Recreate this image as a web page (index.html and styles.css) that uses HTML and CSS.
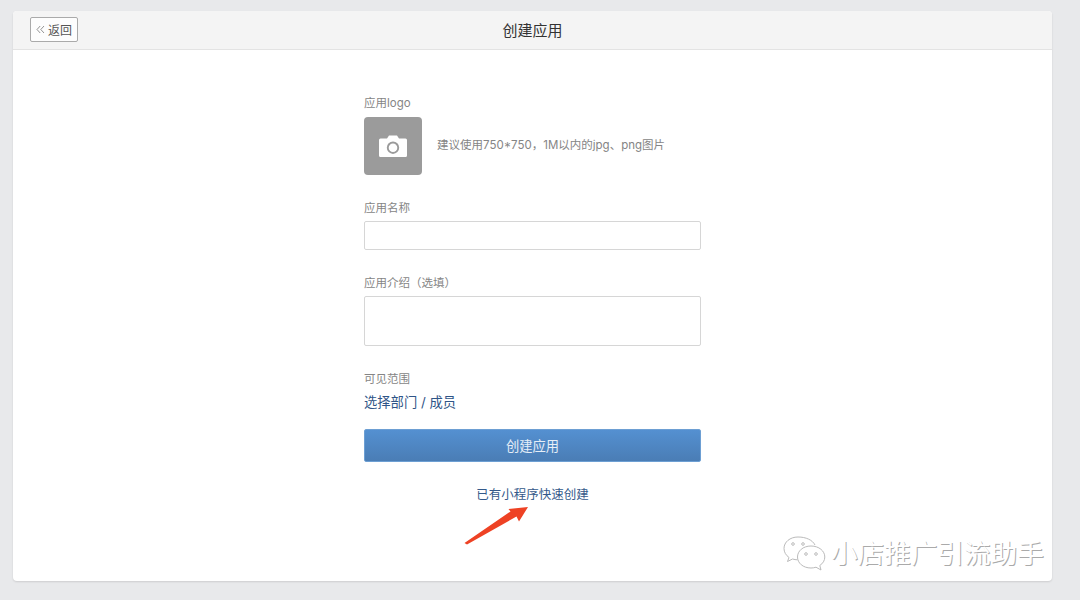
FILE: index.html
```html
<!DOCTYPE html>
<html lang="zh">
<head>
<meta charset="utf-8">
<title>创建应用</title>
<link rel="stylesheet" href="styles.css">
</head>
<body>
<main class="card">
  <header class="head">
    <a class="back"><svg class="back-icon" viewBox="0 0 9 9"><path d="M4.200 1 1 4.500 4.200 8M8 1 4.800 4.500 8 8"/></svg>返回</a>
    <h1 class="title">创建应用</h1>
  </header>
  <form class="form">
    <div class="label">应用logo</div>
    <div class="logo-row">
      <div class="logo">
        <svg class="camera" viewBox="0 0 28 22"><path fill-rule="evenodd" d="M1.500 3.500H8L10 .5h8l2 3h6.500a1.500 1.500 0 0 1 1.500 1.500v15.500a1.500 1.500 0 0 1-1.500 1.500H1.500A1.500 1.500 0 0 1 0 20.500V5a1.500 1.500 0 0 1 1.500-1.500ZM14 6.500a6.200 6.200 0 1 0 0 12.400 6.200 6.200 0 0 0 0-12.400Zm0 1.900a4.300 4.300 0 1 1 0 8.600 4.300 4.300 0 0 1 0-8.600Z"/></svg>
      </div>
      <span class="hint">建议使用750*750，1M以内的jpg、png图片</span>
    </div>
    <div class="label gap-name">应用名称</div>
    <div class="input"></div>
    <div class="label gap-intro">应用介绍（选填）</div>
    <div class="input area"></div>
    <div class="label gap-scope">可见范围</div>
    <a class="scope">选择部门 / 成员</a>
    <button class="submit" type="button">创建应用</button>
    <a class="quick">已有小程序快速创建</a>
  </form>
</main>
<svg class="arrow" viewBox="0 0 70 42"><path d="M65 2 56 16.500 53.500 11.500 4 39.500 1.500 38 47.500 6.500 45.500 4Z"/></svg>
<div class="mark">
  <svg class="wechat" viewBox="0 0 44 36"><path d="M16 2C8 2 2 7 2 13.500c0 3.700 2 6.800 5 9l-1.500 4 5-2.500c1.500.5 3.500.8 5 .8M33 10C30.500 5 24 2 16 2"/><path d="M29 11c-8 0-13.500 5-13.500 11S21 33 29 33c1.800 0 3.500-.3 5-.8l5 2.800-1.200-4.500c3-2 5-5 5-8.500 0-6-5.800-11-13.800-11Z"/><circle cx="11" cy="9" r="1.300"/><circle cx="21" cy="9" r="1.300"/><circle cx="24" cy="19" r="1.300"/><circle cx="34" cy="19" r="1.300"/></svg>
  <span class="mark-text">小店推广引流助手</span>
</div>
</body>
</html>
```
FILE: styles.css
```css
* { box-sizing: border-box; }
html, body { height: 100%; }
body {
  margin: 0;
  padding: 11px 28px 19px 13px;
  background: #e8e9eb;
  font-family: "Inter", "Noto Sans CJK SC", sans-serif;
  color: #333;
  overflow: hidden;
}
.card {
  height: 570px;
  background: #fff;
  border-radius: 4px;
  box-shadow: 0 1px 2px rgba(0, 0, 0, .12);
  overflow: hidden;
}
.head {
  height: 39px;
  display: flex;
  align-items: center;
  justify-content: center;
  position: relative;
  background: #f4f4f4;
  border-bottom: 1px solid #e3e3e3;
}
.back {
  position: absolute;
  left: 17px;
  top: 6px;
  width: 48px;
  height: 25px;
  display: flex;
  align-items: center;
  justify-content: center;
  gap: 3px;
  font-size: 12px;
  color: #555;
  background: #fdfdfd;
  border: 1px solid #aaa;
  border-radius: 2px;
}
.back-icon { width: 9px; height: 9px; fill: none; stroke: #888; stroke-width: .9; }
.title { margin: 0 0 1px; font-size: 15px; font-weight: 400; color: #333; }
.form {
  width: 337px;
  margin-left: 351px;
  padding-top: 45px;
  display: flex;
  flex-direction: column;
}
.label { font-size: 11.500px; line-height: 16px; color: #858585; }
.logo-row { display: flex; align-items: center; gap: 15px; margin-top: 6px; }
.logo {
  width: 58px;
  height: 58px;
  display: flex;
  align-items: center;
  justify-content: center;
  background: #9b9b9b;
  border-radius: 4px;
}
.camera { width: 28px; height: 22px; fill: #fff; }
.hint { font-size: 11.500px; line-height: 16px; color: #858585; margin-top: -2px; }
.gap-name { margin-top: 25px; }
.input { height: 29px; margin-top: 5px; border: 1px solid #d6d6d6; border-radius: 2px; background: #fff; }
.area { height: 50px; }
.gap-intro { margin-top: 25px; }
.gap-scope { margin-top: 25px; }
.scope { margin-top: 5px; font-size: 13.300px; line-height: 20px; color: #2f5587; }
.submit {
  height: 33px;
  margin-top: 17px;
  padding: 0 0 1px;
  border: 1px solid #6d9fd3;
  border-radius: 2px;
  background: linear-gradient(#5490d1, #4a7db5);
  color: #e6eef7;
  font: inherit;
  font-size: 13.300px;
}
.quick { margin-top: 24px; text-align: center; font-size: 12.500px; line-height: 18px; color: #34598a; }
.arrow { position: absolute; left: 463px; top: 505px; width: 70px; height: 42px; fill: #ee4224; }
.mark { position: absolute; left: 782px; top: 535px; display: flex; align-items: center; gap: 5px; }
.wechat { width: 44px; height: 36px; fill: #fff; stroke: #bbb; stroke-width: 1; }
.mark-text {
  font-size: 26.600px;
  line-height: 36px;
  white-space: nowrap;
  color: #fff;
  text-shadow: 1px 1px 0 #aaa;
}
```
